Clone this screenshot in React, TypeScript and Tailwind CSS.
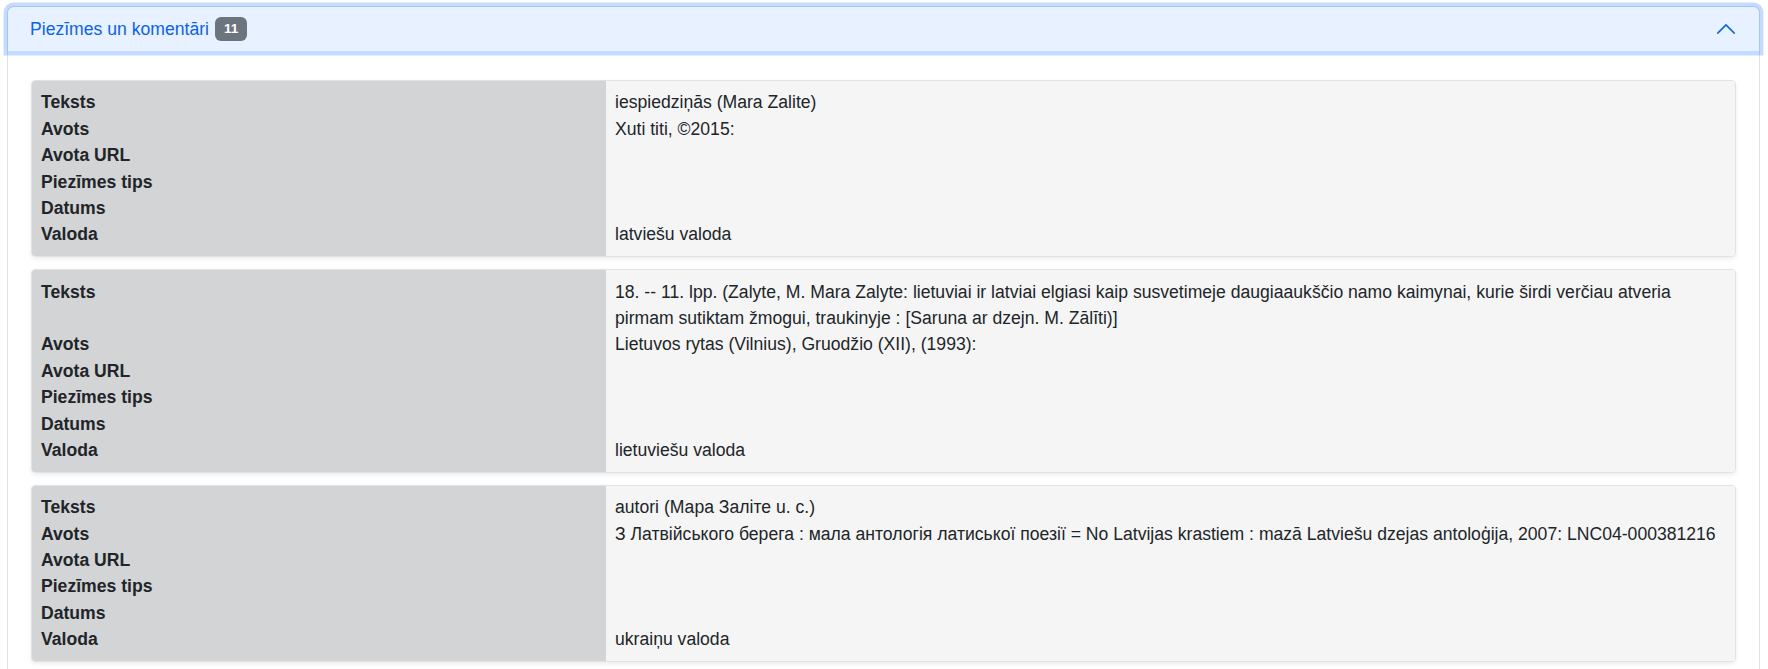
type Note = {
  id: number;
  teksts: string;
  avots: string;
  avotaUrl: string;
  tips: string;
  datums: string;
  valoda: string;
};

const notes: Note[] = [
  {
    id: 1,
    teksts: 'iespiedziņās (Mara Zalite)',
    avots: 'Xuti titi, ©2015:',
    avotaUrl: '',
    tips: '',
    datums: '',
    valoda: 'latviešu valoda'
  },
  {
    id: 2,
    teksts:
      '18. -- 11. lpp. (Zalyte, M. Mara Zalyte: lietuviai ir latviai elgiasi kaip susvetimeje daugiaaukščio namo kaimynai, kurie širdi verčiau atveria pirmam sutiktam žmogui, traukinyje : [Saruna ar dzejn. M. Zālīti)]',
    avots: 'Lietuvos rytas (Vilnius), Gruodžio (XII), (1993):',
    avotaUrl: '',
    tips: '',
    datums: '',
    valoda: 'lietuviešu valoda'
  },
  {
    id: 3,
    teksts: 'autori (Мара Заліте u. c.)',
    avots:
      'З Латвійського берега : мала антологія латиської поезії = No Latvijas krastiem : mazā Latviešu dzejas antoloģija, 2007: LNC04-000381216',
    avotaUrl: '',
    tips: '',
    datums: '',
    valoda: 'ukraiņu valoda'
  }
];

function NoteCard({ note }: { note: Note }) {
  const rows: [string, string][] = [
    ['Teksts', note.teksts],
    ['Avots', note.avots],
    ['Avota URL', note.avotaUrl],
    ['Piezīmes tips', note.tips],
    ['Datums', note.datums],
    ['Valoda', note.valoda]
  ];

  return (
    <div className="grid grid-cols-[574px_1fr] overflow-hidden rounded-[4px] border border-[#e1e2e4] shadow-[0_2px_4px_rgba(0,0,0,0.075)]">
      {rows.map(([label, value], i) => {
        const edge = i === 0 ? 'pt-[8.4px]' : i === rows.length - 1 ? 'pb-[8.4px]' : '';
        return (
          <div className="contents" key={label}>
            <div className={`bg-[#d3d4d5] pl-[9px] font-bold ${edge}`}>{label}</div>
            <div className={`min-h-[26.4px] bg-[#f5f5f5] pr-[9px] pl-[9px] ${edge}`}>{value}</div>
          </div>
        );
      })}
    </div>
  );
}

export default function App() {
  return (
    <div className="min-h-screen bg-white pt-[6px] pr-[8px] pl-[7px] font-['Liberation_Sans',Arial,sans-serif] text-[17.6px] leading-[26.4px] text-[#212529]">
      <div className="h-[663px] rounded-t-[6.6px] border border-b-0 border-[#dee2e6]">
        <button
          className="relative z-10 flex w-full items-center rounded-t-[5.6px] bg-[#e7f1ff] px-[22px] py-[8.8px] text-left text-[#0c63e4] shadow-[0_0_0_4.4px_rgba(13,110,253,0.25)]"
          type="button"
        >
          <span>Piezīmes un komentāri</span>
          <span className="ml-[6px] rounded-[6px] bg-[#6c757d] px-[9px] py-[5px] text-[13.6px] leading-none font-bold text-white">
            11
          </span>
          <svg
            className="ml-auto"
            width="22"
            height="22"
            viewBox="0 0 16 16"
            fill="none"
            stroke="#0c63e4"
            strokeWidth="1.1"
            strokeLinecap="round"
            strokeLinejoin="round"
          >
            <path d="M2 11L8 5L14 11" />
          </svg>
        </button>

        <div className="flex flex-col gap-[12px] pt-[29px] pr-[23px] pl-[23px]">
          {notes.map((note) => (
            <NoteCard key={note.id} note={note} />
          ))}
        </div>
      </div>
    </div>
  );
}
